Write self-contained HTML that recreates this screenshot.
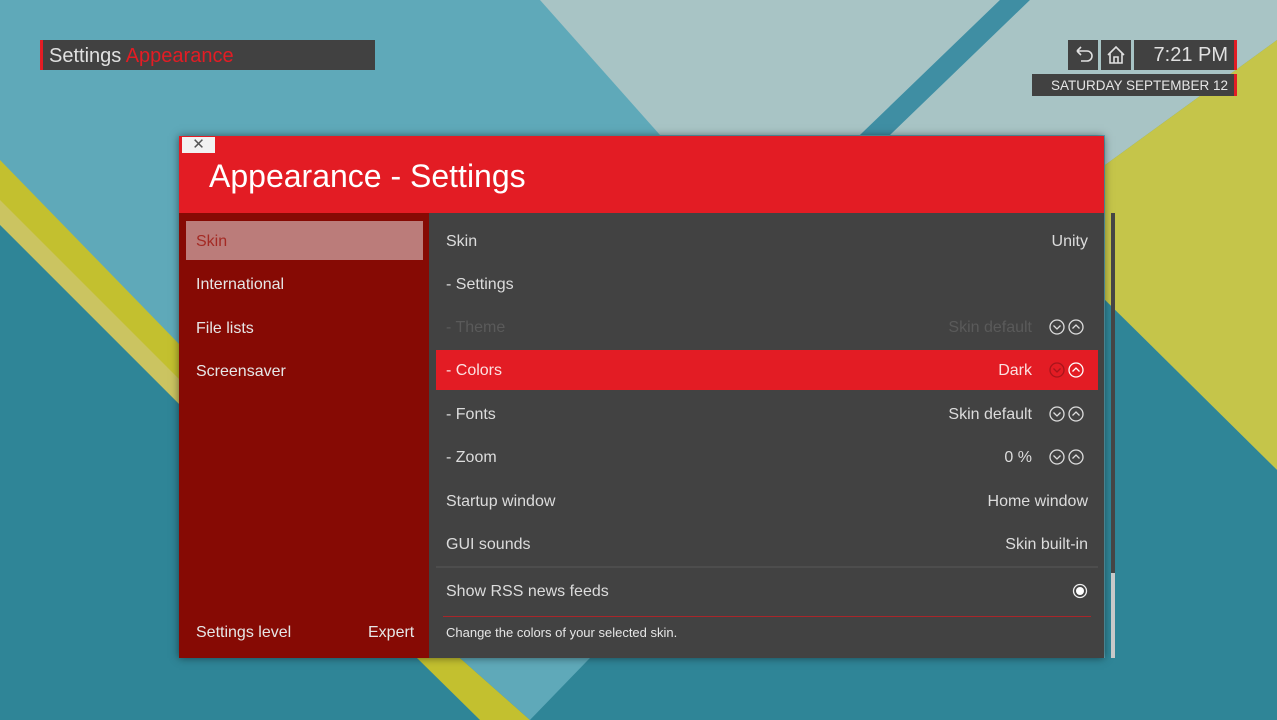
<!DOCTYPE html>
<html><head><meta charset="utf-8">
<style>
*{margin:0;padding:0;box-sizing:border-box}
body{width:1277px;height:720px;overflow:hidden;position:relative;font-family:"Liberation Sans",sans-serif;background:#2f8597}
.abs{position:absolute}
.txt{color:#e6e6e6;font-size:16px}
.row{position:absolute;left:436px;width:662px;height:40px;line-height:42px;font-size:16px;color:#dcdcdc}
.row .l{position:absolute;left:10px}
.row .r{position:absolute;right:10px}
.row .r2{position:absolute;right:66px}
.arr{position:absolute;right:13px;top:12px;width:36px;height:16px}
</style></head><body>
<svg class="abs" style="left:0;top:0" width="1277" height="720">
<rect width="1277" height="720" fill="#2f8597"/>
<polygon points="0,0 1277,0 1277,40 1105,165 1105,300 1277,470 1277,720 530,720 590,658 180,400 0,225" fill="#5fa9b9"/>
<polygon points="540,0 1000,0 860,135 660,135" fill="#a8c4c5"/>
<polygon points="1000,0 1030,0 890,135 860,135" fill="#3f8ea3"/>
<polygon points="1030,0 1277,0 1277,40 1105,165 1105,135 890,135" fill="#a8c4c5"/>
<polygon points="1277,40 1277,470 1105,300 1105,165" fill="#c5c54a"/>
<polygon points="1105,300 1277,470 1277,720 1105,720" fill="#2f8597"/>
<polygon points="0,160 180,345 180,405 0,225" fill="#c3c02f"/>
<polygon points="0,200 180,380 180,405 0,225" fill="#cbc461"/>
<polygon points="0,225 180,405 180,720 0,720" fill="#2f8597"/>
<polygon points="417,658 460,658 530,720 480,720" fill="#c3c02f"/>
<polygon points="460,658 590,658 530,720" fill="#5fa9b9"/>
<polygon points="590,658 1105,658 1105,720 530,720" fill="#2f8597"/>
</svg>

<div class="abs" style="left:40px;top:40px;width:335px;height:30px;background:#414141;border-left:3px solid #e31c24"></div>
<div class="abs" style="left:49px;top:44px;font-size:20px;color:#e0e0e0;line-height:24px">Settings <span style="color:#e31c24">Appearance</span></div>

<div class="abs" style="left:1068px;top:40px;width:30px;height:30px;background:#414141"></div>
<svg class="abs" style="left:1068px;top:40px" width="30" height="30"><path d="M9 11h10a5 5 0 0 1 0 10h-6M9 11l4-4M9 11l4 4" fill="none" stroke="#e0e0e0" stroke-width="1.6"/></svg>
<div class="abs" style="left:1101px;top:40px;width:30px;height:30px;background:#414141"></div>
<svg class="abs" style="left:1101px;top:40px" width="30" height="30"><path d="M7 15l8-8 8 8M9 13v10h12V13M13 23v-6h4v6" fill="none" stroke="#e0e0e0" stroke-width="1.6"/></svg>
<div class="abs" style="left:1134px;top:40px;width:103px;height:30px;background:#414141;border-right:3px solid #e31c24;color:#e0e0e0;font-size:20px;line-height:31px;text-align:right;padding-right:6px">7:21 PM</div>
<div class="abs" style="left:1032px;top:74px;width:205px;height:22px;background:#414141;border-right:3px solid #e31c24;color:#e6e6e6;font-size:13.5px;line-height:23px;text-align:right;padding-right:6px">SATURDAY SEPTEMBER 12</div>

<div class="abs" style="left:179px;top:136px;width:925px;height:522px;box-shadow:0 0 8px rgba(0,0,0,.5)"></div>
<div class="abs" style="left:179px;top:136px;width:925px;height:77px;background:#e31c24"></div>
<div class="abs" style="left:182px;top:137px;width:33px;height:16px;background:#f2f2f2;color:#555;font-size:15px;line-height:16px;text-align:center">✕</div>
<div class="abs" style="left:209px;top:155px;font-size:32px;color:#fff;line-height:42px">Appearance - Settings</div>
<div class="abs" style="left:179px;top:213px;width:250px;height:445px;background:#860a04"></div>
<div class="abs" style="left:429px;top:213px;width:675px;height:445px;background:#424242"></div>
<div class="abs" style="left:186px;top:221px;width:237px;height:39px;background:#bb7c7a"></div>
<div class="abs" style="left:196px;top:233px;font-size:16px;color:#a42a24">Skin</div>
<div class="abs txt" style="left:196px;top:276px">International</div>
<div class="abs txt" style="left:196px;top:320px">File lists</div>
<div class="abs txt" style="left:196px;top:363px">Screensaver</div>
<div class="abs txt" style="left:196px;top:624px">Settings level</div>
<div class="abs txt" style="left:368px;top:624px">Expert</div>

<div class="row" style="top:221px"><span class="l">Skin</span><span class="r">Unity</span></div>
<div class="row" style="top:264px"><span class="l">- Settings</span></div>
<div class="row" style="top:307px;color:#5a5a5a"><span class="l">- Theme</span><span class="r2">Skin default</span>
<svg class="arr" viewBox="0 0 36 16"><circle cx="8" cy="8" r="7" fill="none" stroke="#ddd" stroke-width="1.3"/><path d="M4.5 6.5l3.5 3.5 3.5-3.5" fill="none" stroke="#ddd" stroke-width="1.3"/><circle cx="27" cy="8" r="7" fill="none" stroke="#ddd" stroke-width="1.3"/><path d="M23.5 9.5l3.5-3.5 3.5 3.5" fill="none" stroke="#ddd" stroke-width="1.3"/></svg></div>
<div class="row" style="top:350px;background:#e31c24;color:#fbe0e0"><span class="l">- Colors</span><span class="r2">Dark</span>
<svg class="arr" viewBox="0 0 36 16"><circle cx="8" cy="8" r="7" fill="none" stroke="#a8151b" stroke-width="1.3"/><path d="M4.5 6.5l3.5 3.5 3.5-3.5" fill="none" stroke="#a8151b" stroke-width="1.3"/><circle cx="27" cy="8" r="7" fill="none" stroke="#fff" stroke-width="1.3"/><path d="M23.5 9.5l3.5-3.5 3.5 3.5" fill="none" stroke="#fff" stroke-width="1.3"/></svg></div>
<div class="row" style="top:394px"><span class="l">- Fonts</span><span class="r2">Skin default</span>
<svg class="arr" viewBox="0 0 36 16"><circle cx="8" cy="8" r="7" fill="none" stroke="#ddd" stroke-width="1.3"/><path d="M4.5 6.5l3.5 3.5 3.5-3.5" fill="none" stroke="#ddd" stroke-width="1.3"/><circle cx="27" cy="8" r="7" fill="none" stroke="#ddd" stroke-width="1.3"/><path d="M23.5 9.5l3.5-3.5 3.5 3.5" fill="none" stroke="#ddd" stroke-width="1.3"/></svg></div>
<div class="row" style="top:437px"><span class="l">- Zoom</span><span class="r2">0 %</span>
<svg class="arr" viewBox="0 0 36 16"><circle cx="8" cy="8" r="7" fill="none" stroke="#ddd" stroke-width="1.3"/><path d="M4.5 6.5l3.5 3.5 3.5-3.5" fill="none" stroke="#ddd" stroke-width="1.3"/><circle cx="27" cy="8" r="7" fill="none" stroke="#ddd" stroke-width="1.3"/><path d="M23.5 9.5l3.5-3.5 3.5 3.5" fill="none" stroke="#ddd" stroke-width="1.3"/></svg></div>
<div class="row" style="top:481px"><span class="l">Startup window</span><span class="r">Home window</span></div>
<div class="row" style="top:524px"><span class="l">GUI sounds</span><span class="r">Skin built-in</span></div>
<div class="abs" style="left:436px;top:566px;width:662px;height:2px;background:#4d4d4d"></div>
<div class="row" style="top:571px"><span class="l">Show RSS news feeds</span>
<svg class="abs" style="right:10px;top:12px" width="16" height="16"><circle cx="8" cy="8" r="6.5" fill="none" stroke="#eee" stroke-width="1.3"/><circle cx="8" cy="8" r="4" fill="#fff"/></svg></div>
<div class="abs" style="left:443px;top:616px;width:648px;height:1px;background:#a8262a"></div>
<div class="abs" style="left:446px;top:625px;font-size:13px;color:#e6e6e6">Change the colors of your selected skin.</div>

<div class="abs" style="left:1111px;top:213px;width:4px;height:360px;background:#454545"></div>
<div class="abs" style="left:1111px;top:573px;width:4px;height:85px;background:#c9c9c9"></div>
</body></html>
